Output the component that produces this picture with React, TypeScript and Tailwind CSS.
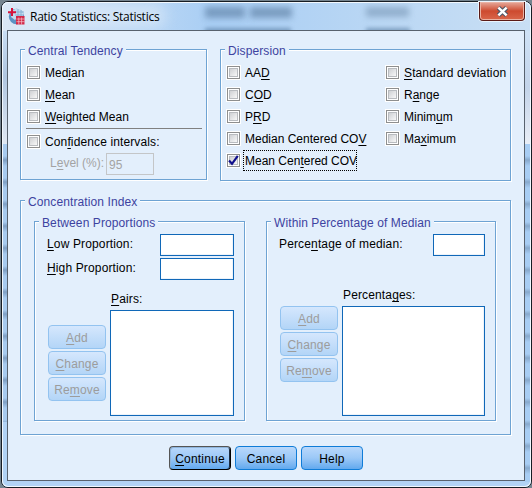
import type { ReactNode } from "react";

/* Label with an underlined keyboard mnemonic, marked by "_" before the letter. */
function Mnemonic({ text }: { text: string }) {
  const i = text.indexOf("_");
  if (i < 0) return <>{text}</>;
  return (
    <>
      {text.slice(0, i)}
      <span className="underline decoration-1 underline-offset-2 [text-decoration-skip-ink:none]">{text[i + 1]}</span>
      {text.slice(i + 2)}
    </>
  );
}

function Group({ title, className, children }: { title: string; className: string; children: ReactNode }) {
  return (
    <section
      className={`border border-[#6ea3d3] shadow-[1px_1px_0_#fff,inset_1px_1px_0_#fff] ${className}`}
    >
      <h2 className="-mt-[7px] ml-[4px] h-[15px] w-fit bg-[#e3effc] px-[3px] tracking-[0.1px] text-[#3d43a0]">{title}</h2>
      {children}
    </section>
  );
}

function Check({ label, checked = false, wide = false }: { label: string; checked?: boolean; wide?: boolean }) {
  return (
    <label className="flex h-[22px] items-start pt-[5px]">
      <span className="flex size-[13px] shrink-0 items-center justify-center border border-[#8e8f8f] bg-white shadow-[0_0_0_1px_#fff]">
        <span className="size-[9px] border border-[#b9bcc0] bg-linear-to-br from-[#cfd1d4] to-[#f8f8f8]">
          {checked && (
            <svg viewBox="0 0 11 11" className="-mt-[2px] -ml-[2px] size-[11px] overflow-visible">
              <path d="M1 5.5 4 8.8 9.8 .8" fill="none" stroke="#10108c" strokeWidth="2.2" />
            </svg>
          )}
        </span>
      </span>
      <span
        className={
          checked
            ? "-mt-[4px] ml-[3px] h-[21px] w-[114px] shrink-0 border border-dotted border-black pl-px leading-[20px] whitespace-nowrap"
            : `-mt-px ml-[5px] whitespace-nowrap ${wide ? "tracking-[0.12px]" : ""}`
        }
      >
        <Mnemonic text={label} />
      </span>
    </label>
  );
}

function SideButton({ label }: { label: string }) {
  return (
    <button className="h-[24px] w-[58px] rounded-[4px] border border-[#93c3f0] bg-linear-to-b from-[#d5e7fd] to-[#b3d5f7] pt-[2px] leading-[20px] tracking-[0.15px] text-[#9c9c9c]">
      <Mnemonic text={label} />
    </button>
  );
}

function SideButtons() {
  return (
    <div className="flex flex-col gap-[2px]">
      <SideButton label="_Add" />
      <SideButton label="_Change" />
      <SideButton label="Re_move" />
    </div>
  );
}

function ActionButton({ label, primary = false }: { label: string; primary?: boolean }) {
  return (
    <button
      className={`h-[24px] w-[62px] rounded-[4px] border bg-linear-to-b from-[#b9d8fb] via-[#9bc8f7] to-[#62a9ee] pt-[2px] leading-[20px] tracking-[0.2px] text-black ${
        primary
          ? "border-t-[#555] border-r-black border-b-black border-l-[#555] shadow-[inset_1px_1px_0_#8fb5dc,inset_-1px_0_0_#1b2b40]"
          : "border-[#0f7cd8]"
      }`}
    >
      <Mnemonic text={label} />
    </button>
  );
}

function Field({ className }: { className: string }) {
  return <div className={`border border-[#1068b8] bg-white shadow-[inset_-1px_-1px_0_#edf3fa] ${className}`} />;
}

function AppIcon() {
  return (
    <svg viewBox="0 0 17 17" className="size-[17px]">
      <circle cx="8.5" cy="8.5" r="7.7" fill="#5c92c4" />
      <path d="M7 1h5l4 5-2 3-3-1-4 4-4-3 1-6z" fill="#c4dbee" />
      <path d="M10 1v9M13 2v7M7 4h9M7 7h9" stroke="#7eaad0" strokeWidth=".8" />
      <path d="M4 0v8M0 4.2h8" stroke="#d5143c" strokeWidth="2" />
      <path d="M8 8h8.5v8.5H8z" fill="#d32747" />
      <path d="M8.5 11h8M8.5 13.7h8M10.8 9.5v7M13.6 9.5v7" stroke="#f5c5ce" strokeWidth=".7" />
    </svg>
  );
}

/* Blurred desktop content showing through the glass frame. */
function Glass() {
  return (
    <div className="pointer-events-none absolute inset-0 overflow-hidden rounded-[6px]">
      <div className="absolute inset-x-0 top-0 h-[29px] bg-linear-to-r from-[#dbe8f6] via-[#a9cef4] via-40% to-[#c9dff4]" />
      <div className="absolute top-[3px] left-[14px] h-[22px] w-[150px] rounded-full bg-[#e2edf9] opacity-60 blur-[7px]" />
      <div className="absolute top-[5px] left-[203px] h-[11px] w-[40px] bg-[#5f81a6] opacity-65 blur-[3px]" />
      <div className="absolute top-[5px] left-[248px] h-[11px] w-[42px] bg-[#5f81a6] opacity-65 blur-[3px]" />
      <div className="absolute top-[5px] left-[364px] h-[10px] w-[43px] bg-[#6988a8] opacity-50 blur-[3px]" />
      <div className="absolute top-[26px] left-[203px] h-[6px] w-[86px] bg-[#54799f] opacity-60 blur-[2px]" />
      <div className="absolute top-[26px] left-[364px] h-[6px] w-[44px] bg-[#54799f] opacity-60 blur-[2px]" />
      <div className="absolute top-[29px] left-0 h-[113px] w-[6px] bg-linear-to-b from-[#c9def4] via-[#b0c6e0] via-40% to-[#e0e8f3]" />
      <div className="absolute top-[29px] right-0 h-[113px] w-[6px] bg-linear-to-b from-[#cfe2f6] via-[#c3d4ea] to-[#e9eef6]" />
      <div className="absolute top-[142px] left-0 h-[278px] w-[6px] bg-[repeating-linear-gradient(to_bottom,#a8cbef_0px,#a8cbef_12px,#7f9fc3_16px,#a8cbef_22px)]" />
      <div className="absolute top-[142px] right-0 h-[338px] w-[6px] bg-[repeating-linear-gradient(to_bottom,#a8cdf3_0px,#a8cdf3_12px,#88a9cc_16px,#a8cdf3_22px)]" />
    </div>
  );
}

export default function App() {
  return (
    <div className="h-[488px] w-[532px] overflow-hidden bg-[#75848f] pt-px pl-px font-['Liberation_Sans',Arial,sans-serif] text-[12px] leading-[16px] text-black">
      <div className="relative h-[487px] w-[531px] rounded-[7px] border border-[#171d24] bg-[#b2d3f5]">
        <Glass />
        <div className="relative h-full rounded-[6px] px-[5px] shadow-[inset_0_0_0_1px_#f2f8fe]">
          <header className="flex h-[28px] justify-between">
            <div className="flex items-center pt-px pl-px">
              <AppIcon />
              <h1 className="ml-[5px] font-['Open_Sans','Noto_Sans',sans-serif] text-[12px] leading-[16px] tracking-[-0.26px] whitespace-nowrap">
                Ratio Statistics: Statistics
              </h1>
            </div>
            <button className="mr-px flex h-[19px] w-[46px] items-center justify-center rounded-b-[4px] border border-t-0 border-[#5b1a16] bg-linear-to-b from-[#e5a99b] via-[#cd4a2f] via-50% to-[#d9664a] shadow-[0_0_0_1px_#eaf4fd,inset_0_0_0_1px_#eab3a4]">
              <svg viewBox="0 0 12 10" className="h-[11px] w-[13px]">
                <path d="M2.2 1.5 9.8 8.5M9.8 1.5 2.2 8.5" stroke="#4d5666" strokeWidth="4.2" />
                <path d="M2.2 1.5 9.8 8.5M9.8 1.5 2.2 8.5" stroke="#fff" strokeWidth="2.3" />
              </svg>
            </button>
          </header>

          <main className="h-[451px] w-[518px] border border-[#58626e] bg-[#e3effc] pt-[18px] pl-[12px]">
            <div className="flex items-start gap-[13px]">
              <Group title="Central Tendency" className="h-[131px] w-[187px]">
                <div className="mt-[3px] pl-[6px]">
                  <Check label="Med_ian" />
                  <Check label="_Mean" />
                  <Check label="_Weighted Mean" />
                </div>
                <div className="mt-px ml-[5px] h-px w-[176px] bg-[#808080]" />
                <div className="mt-px pl-[6px]">
                  <Check label="Con_fidence intervals:" wide />
                </div>
                <div className="mt-px flex pl-[29px] text-[#a3a3a3]">
                  <span className="w-[56px] pt-[2px] whitespace-nowrap">
                    <Mnemonic text="L_evel (%):" />
                  </span>
                  <div className="h-[22px] w-[48px] border border-[#c4c6c8] pl-[2px] leading-[22px]">95</div>
                </div>
              </Group>
              <Group title="Dispersion" className="h-[132px] w-[291px]">
                <div className="mt-[3px] flex pl-[6px]">
                  <div className="w-[159px]">
                    <Check label="AA_D" />
                    <Check label="C_OD" />
                    <Check label="P_RD" />
                    <Check label="Median Centered CO_V" />
                    <Check label="Mean Cen_tered COV" checked />
                  </div>
                  <div>
                    <Check label="_Standard deviation" wide />
                    <Check label="R_ange" />
                    <Check label="Minim_um" />
                    <Check label="Ma_ximum" />
                  </div>
                </div>
              </Group>
            </div>

            <Group title="Concentration Index" className="mt-[19px] h-[235px] w-[491px]">
              <div className="mt-[12px] flex gap-[21px] pl-[13px] tracking-[0.14px]">
                <Group title="Between Proportions" className="h-[200px] w-[211px]">
                  <div className="mt-[4px] flex flex-col gap-[2px] pl-[12px]">
                    <div className="flex">
                      <span className="w-[113px] pt-[2px]"><Mnemonic text="_Low Proportion:" /></span>
                      <Field className="h-[22px] w-[74px]" />
                    </div>
                    <div className="flex">
                      <span className="w-[113px] pt-[2px]"><Mnemonic text="_High Proportion:" /></span>
                      <Field className="h-[22px] w-[74px]" />
                    </div>
                  </div>
                  <div className="mt-[11px] ml-[76px]"><Mnemonic text="_Pairs:" /></div>
                  <div className="mt-[3px] flex gap-[4px] pl-[13px]">
                    <div className="pt-[15px]"><SideButtons /></div>
                    <Field className="h-[106px] w-[124px]" />
                  </div>
                </Group>
                <Group title="Within Percentage of Median" className="h-[200px] w-[230px]">
                  <div className="mt-[4px] flex pl-[12px]">
                    <span className="w-[154px] pt-[2px]"><Mnemonic text="Perce_ntage of median:" /></span>
                    <Field className="h-[22px] w-[52px]" />
                  </div>
                  <div className="mt-[31px] ml-[76px]"><Mnemonic text="Percenta_ges:" /></div>
                  <div className="mt-[3px] flex gap-[4px] pl-[13px]">
                    <SideButtons />
                    <Field className="h-[110px] w-[143px]" />
                  </div>
                </Group>
              </div>
            </Group>

            <footer className="mt-[11px] ml-[149px] flex gap-[4px]">
              <ActionButton label="_Continue" primary />
              <ActionButton label="Cancel" />
              <ActionButton label="Help" />
            </footer>
          </main>
        </div>
      </div>
    </div>
  );
}
